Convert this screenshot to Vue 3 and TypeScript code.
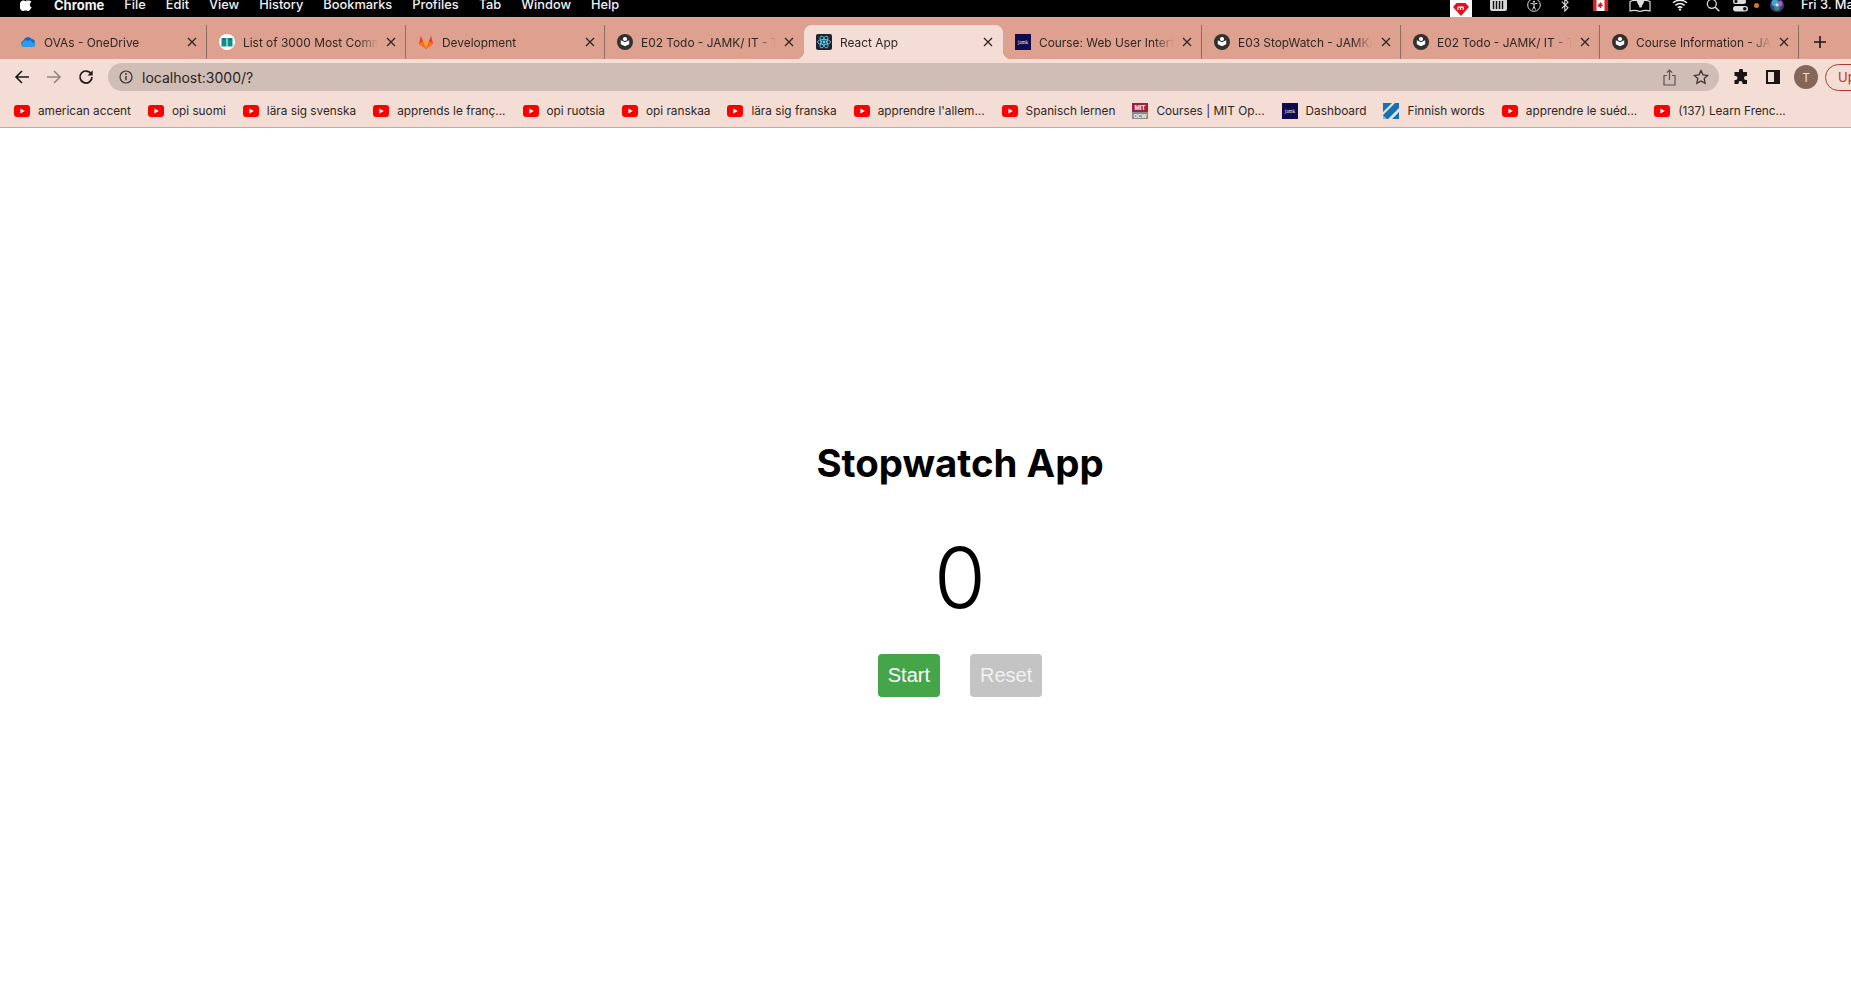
<script setup lang="ts">
import { ref } from "vue";

interface Tab {
	title: string;
	icon: string;
	active?: boolean;
}

interface Bookmark {
	title: string;
	icon: string;
}

const menus = ["File", "Edit", "View", "History", "Bookmarks", "Profiles", "Tab", "Window", "Help"];

const tabs: Tab[] = [
	{ title: "OVAs - OneDrive", icon: "onedrive" },
	{ title: "List of 3000 Most Common Words", icon: "book" },
	{ title: "Development", icon: "gitlab" },
	{ title: "E02 Todo - JAMK/ IT - Tiko", icon: "gitbook" },
	{ title: "React App", icon: "react", active: true },
	{ title: "Course: Web User Interfaces", icon: "jamk" },
	{ title: "E03 StopWatch - JAMK/ IT", icon: "gitbook" },
	{ title: "E02 Todo - JAMK/ IT - Tiko", icon: "gitbook" },
	{ title: "Course Information - JAMK", icon: "gitbook" },
];

const bookmarks: Bookmark[] = [
	{ title: "american accent", icon: "youtube" },
	{ title: "opi suomi", icon: "youtube" },
	{ title: "lära sig svenska", icon: "youtube" },
	{ title: "apprends le franç...", icon: "youtube" },
	{ title: "opi ruotsia", icon: "youtube" },
	{ title: "opi ranskaa", icon: "youtube" },
	{ title: "lära sig franska", icon: "youtube" },
	{ title: "apprendre l'allem...", icon: "youtube" },
	{ title: "Spanisch lernen", icon: "youtube" },
	{ title: "Courses | MIT Op...", icon: "mit" },
	{ title: "Dashboard", icon: "jamk" },
	{ title: "Finnish words", icon: "finnish" },
	{ title: "apprendre le suéd...", icon: "youtube" },
	{ title: "(137) Learn Frenc...", icon: "youtube" },
];

const seconds = ref(0);
</script>

<template>
	<div class="viewport">
		<svg class="sprite" width="0" height="0" aria-hidden="true">
			<symbol id="onedrive" viewBox="0 0 16 16">
				<path d="M4 12.5a3 3 0 0 1-.6-5.9A4.6 4.6 0 0 1 11.6 5 3.6 3.6 0 0 1 15 8.6l-6 3.9z" fill="#0f6cc4" />
				<path d="M3.4 13a2.4 2.4 0 0 1-.5-4.7 3 3 0 0 1 4.4-1.6 3.2 3.2 0 0 1 4.8 1.7A2.4 2.4 0 0 1 13.5 13z" fill="#2b9be8" />
			</symbol>
			<symbol id="book" viewBox="0 0 16 16">
				<circle cx="8" cy="8" r="8" fill="#fff" />
				<path d="M2.5 4h5v8.5h-5zM8.5 4h5v8.5h-5z" fill="#0f8f88" />
				<path d="M3.5 5.5h3M9.5 5.5h3" stroke="#076b66" stroke-width=".8" />
			</symbol>
			<symbol id="gitlab" viewBox="0 0 16 16">
				<path d="M8 15 1 9.7 2.8 1.8 5 7h6l2.2-5.200L15 9.7z" fill="#e24329" />
				<path d="M8 15 1 9.7 5 7z" fill="#fc6d26" />
				<path d="M8 15l7-5.300L11 7z" fill="#fc6d26" />
				<path d="M8 15 5 7h6z" fill="#fca326" />
			</symbol>
			<symbol id="gitbook" viewBox="0 0 16 16">
				<circle cx="8" cy="8" r="8" fill="#333030" />
				<path d="M3.8 6.3 8 8.2l4.2-1.900v3.900L8 12.3l-4.200-2.100z" fill="#fff" />
				<circle cx="8" cy="5" r="2.1" fill="#fff" />
			</symbol>
			<symbol id="react" viewBox="0 0 16 16">
				<rect width="16" height="16" rx="2" fill="#20232a" />
				<g fill="none" stroke="#61dafb" stroke-width=".8">
					<ellipse cx="8" cy="8" rx="6.5" ry="2.6" />
					<ellipse cx="8" cy="8" rx="6.5" ry="2.6" transform="rotate(60 8 8)" />
					<ellipse cx="8" cy="8" rx="6.5" ry="2.6" transform="rotate(120 8 8)" />
				</g>
				<circle cx="8" cy="8" r="1.4" fill="#61dafb" />
			</symbol>
			<symbol id="jamk" viewBox="0 0 16 16">
				<rect width="16" height="16" fill="#110a4b" />
				<text x="8" y="9.8" text-anchor="middle" font-size="5.2" font-family="'Liberation Serif', serif" fill="#e8e6f4">jamk</text>
			</symbol>
			<symbol id="youtube" viewBox="0 0 16 16">
				<rect y="2" width="16" height="12" rx="3" fill="#f00" />
				<path d="M6.4 5.600 10.800 8l-4.400 2.400z" fill="#fff" />
			</symbol>
			<symbol id="mit" viewBox="0 0 16 16">
				<rect width="16" height="9" fill="#a31f34" />
				<rect y="9" width="16" height="7" fill="#8a8b8c" />
				<text x="8" y="7.2" text-anchor="middle" font-size="6.4" font-weight="700" font-family="'Liberation Sans', sans-serif" fill="#fff">MIT</text>
				<text x="8" y="15" text-anchor="middle" font-size="5.4" font-weight="700" font-family="'Liberation Sans', sans-serif" fill="#fff">OCW</text>
			</symbol>
			<symbol id="finnish" viewBox="0 0 16 16">
				<rect width="16" height="16" fill="#1a6fb0" />
				<path d="M0 9 9 0h3L0 12zM5 16 16 5v4l-7 7z" fill="#dfe6ec" />
				<path d="M0 16V12l4 4z" fill="#8fb6d2" />
			</symbol>
		</svg>

		<div class="browser">
			<header class="menubar">
				<svg class="apple" width="13" height="14" viewBox="0 0 13 14" aria-hidden="true">
					<path d="M9 .2c.1 1-.3 1.800-.8 2.400-.6.600-1.300 1-2.100.9-.1-.9.300-1.800.8-2.300C7.500.6 8.300.2 9 .2zM11.700 10.200c-.4.800-.6 1.200-1.100 1.900-.6 1-1.500 2-2.600 2-1 0-1.200-.6-2.500-.6s-1.600.6-2.600.6c-1.100 0-1.900-1-2.500-1.900C-.4 9.700-.6 6.800.4 5.300c.7-1.100 1.800-1.700 2.900-1.700s1.800.6 2.700.6 1.400-.6 2.700-.6c1 0 2 .5 2.700 1.400-2.300 1.300-1.900 4.600.2 5.200z" fill="#fff" />
				</svg>
				<strong class="menu-app">Chrome</strong>
				<span v-for="menu in menus" :key="menu" class="menu-item">{{ menu }}</span>

				<div class="status">
					<span class="status-app">
						<svg width="16" height="14" viewBox="0 0 16 14" aria-hidden="true">
							<path d="M3.500 1h9L16 5 8 14 0 5z" fill="#e1121b" />
							<path d="M4.800 8V5.200M7.500 8V5.200M10.200 8V5.200M4.800 5.500c1.500-1 2.700-.6 2.700.4M7.500 5.500c1.500-1 2.700-.6 2.700.4" fill="none" stroke="#fff" stroke-width="1.200" />
						</svg>
					</span>
					<svg class="st-barcode" width="17" height="12" viewBox="0 0 17 12" aria-hidden="true">
						<rect width="17" height="12" rx="2" fill="#d8d8d8" />
						<path d="M3.500 2v8M6.500 2v8M9.500 2v8M12.500 2v8" stroke="#111" stroke-width="1.400" />
					</svg>
					<svg class="st-access" width="14" height="14" viewBox="0 0 14 14" aria-hidden="true">
						<circle cx="7" cy="7" r="6.300" fill="none" stroke="#ddd" />
						<circle cx="7" cy="3.700" r="1" fill="#ddd" />
						<path d="M3.500 5.300 7 6l3.500-.7M7 6v2.500M7 8.500 5.500 11.500M7 8.500l1.500 3" fill="none" stroke="#ddd" />
					</svg>
					<svg class="st-bt" width="8" height="14" viewBox="0 0 8 14" aria-hidden="true">
						<path d="M.8 3.700 7 9.800 3.800 13V1L7 4.200.8 10.300" fill="none" stroke="#ddd" stroke-width="1.100" />
					</svg>
					<svg class="st-flag" width="15" height="11" viewBox="0 0 15 11" aria-hidden="true">
						<rect width="15" height="11" fill="#fff" />
						<path d="M0 0h3.500v11H0zM11.500 0H15v11h-3.500zM7.500 2l.8 1.500 1-.4-.3 2 1-.4-.2 1.300-1.500.6H8v1.400H7V7.100h-.8L4.700 6.500 4.500 5.200l1 .4-.3-2 1 .4z" fill="#d8202a" />
					</svg>
					<svg class="st-map" width="23" height="13" viewBox="0 0 23 13" aria-hidden="true">
						<path d="M1 2.500c3-1.500 6-1.500 10 0 4-1.500 7-1.500 10 0v9.500c-3-1-6-1-10 .5-4-1.500-7-1.500-10-.5z" fill="none" stroke="#ddd" stroke-width="1.200" />
						<path d="M8 2.500a3.500 3 0 0 1 7 0c0 2-2 3-2.500 6h-2C10 5.500 8 4.500 8 2.500z" fill="#ddd" />
					</svg>
					<svg class="st-wifi" width="16" height="12" viewBox="0 0 16 12" aria-hidden="true">
						<path d="M1 3.800c4-3.400 10-3.400 14 0M3.400 6.300c2.700-2.200 6.500-2.200 9.200 0M5.700 8.700c1.400-1 3.200-1 4.600 0" fill="none" stroke="#f2f2f2" stroke-width="1.500" />
						<circle cx="8" cy="10.600" r="1.200" fill="#f2f2f2" />
					</svg>
					<svg class="st-search" width="14" height="14" viewBox="0 0 14 14" aria-hidden="true">
						<circle cx="5.800" cy="5.800" r="4.500" fill="none" stroke="#ddd" stroke-width="1.300" />
						<path d="m9 9 4.300 4.300" stroke="#ddd" stroke-width="1.500" />
					</svg>
					<svg class="st-cc" width="15" height="14" viewBox="0 0 15 14" aria-hidden="true">
						<rect y="1" width="13" height="5" rx="2.500" fill="#ddd" />
						<circle cx="3" cy="3.500" r="1.600" fill="#111" />
						<rect y="8" width="15" height="5.500" rx="2.700" fill="#ddd" />
						<circle cx="11.800" cy="10.700" r="1.800" fill="#111" />
					</svg>
					<span class="st-dot"></span>
					<svg class="st-siri" width="14" height="14" viewBox="0 0 14 14" aria-hidden="true">
						<circle cx="7" cy="7" r="7" fill="#3a3f7a" />
						<circle cx="5" cy="5" r="3.400" fill="#3fa7c9" />
						<circle cx="9.500" cy="5.800" r="2.800" fill="#b45ab8" />
						<circle cx="7" cy="9.800" r="2.700" fill="#2f8f88" />
						<circle cx="7" cy="6.800" r="1.600" fill="#d9e3f2" />
					</svg>
					<span class="status-date">Fri 3. Mar</span>
				</div>
			</header>

			<div class="tabstrip">
				<div
					v-for="tab in tabs"
					:key="tab.title + tab.icon"
					class="tab"
					:class="{ 'tab-active': tab.active }"
				>
					<svg class="favicon" width="16" height="16" aria-hidden="true"><use :href="'#' + tab.icon" /></svg>
					<span class="tab-title">{{ tab.title }}</span>
					<svg class="tab-close" width="10" height="10" viewBox="0 0 10 10" aria-hidden="true">
						<path d="m1 1 8 8M9 1 1 9" stroke="#2f2724" stroke-width="1.300" />
					</svg>
				</div>
				<svg class="tab-new" width="14" height="14" viewBox="0 0 14 14" aria-hidden="true">
					<path d="M7 1v12M1 7h12" stroke="#1d1715" stroke-width="1.600" />
				</svg>
			</div>

			<div class="toolbar">
				<svg class="nav-btn" width="16" height="16" viewBox="0 0 16 16" aria-hidden="true">
					<path d="M15 8H2M8 2 2 8l6 6" fill="none" stroke="#1f1a18" stroke-width="1.600" />
				</svg>
				<svg class="nav-btn" width="16" height="16" viewBox="0 0 16 16" aria-hidden="true">
					<path d="M1 8h13M8 2l6 6-6 6" fill="none" stroke="#95857f" stroke-width="1.600" />
				</svg>
				<svg class="nav-btn" width="16" height="16" viewBox="0 0 16 16" aria-hidden="true">
					<path d="M13.300 5.200A6 6 0 1 0 14 8" fill="none" stroke="#1f1a18" stroke-width="1.700" />
					<path d="M14.700 1.200v5.200H9.500z" fill="#1f1a18" />
				</svg>
				<div class="omnibox">
					<svg width="14" height="14" viewBox="0 0 14 14" aria-hidden="true">
						<circle cx="7" cy="7" r="6" fill="none" stroke="#3c3230" stroke-width="1.200" />
						<path d="M7 6v4.200" stroke="#3c3230" stroke-width="1.400" />
						<circle cx="7" cy="4" r=".9" fill="#3c3230" />
					</svg>
					<span class="url">localhost:3000/?</span>
					<svg class="omni-share" width="13" height="17" viewBox="0 0 13 17" aria-hidden="true">
						<path d="M4 6.500H1v9.500h11V6.500H9M6.500 11V1M3.800 3.600 6.500 1l2.700 2.600" fill="none" stroke="#5d5250" stroke-width="1.200" />
					</svg>
					<svg class="omni-star" width="16" height="16" viewBox="0 0 16 16" aria-hidden="true">
						<path d="m8 1.500 2 4.300 4.700.6-3.500 3.200.9 4.700L8 12l-4.100 2.300.9-4.700L1.300 6.400 6 5.800z" fill="none" stroke="#3c3230" stroke-width="1.300" />
					</svg>
				</div>
				<svg class="tool-puzzle" width="16" height="16" viewBox="0 0 16 16" aria-hidden="true">
					<path d="M6 1.500a2 2 0 0 1 4 .5v1h4v4h-1a2 2 0 0 0 0 4h1v4H9.500v-1a2 2 0 0 0-4 0v1H1.500v-4h1a2 2 0 0 0 0-4h-1V3H6z" fill="#1a1513" />
				</svg>
				<svg class="tool-panel" width="14" height="14" viewBox="0 0 14 14" aria-hidden="true">
					<rect x="1" y="1" width="12" height="12" fill="none" stroke="#1a1513" stroke-width="2" />
					<rect x="8" y="1" width="5" height="12" fill="#1a1513" />
				</svg>
				<span class="avatar">T</span>
				<span class="update">Update</span>
			</div>

			<nav class="bookmarks">
				<span v-for="mark in bookmarks" :key="mark.title" class="bookmark">
					<svg class="favicon" width="16" height="16" aria-hidden="true"><use :href="'#' + mark.icon" /></svg>
					{{ mark.title }}
				</span>
			</nav>

			<main class="page">
				<h1 class="title">Stopwatch App</h1>
				<div class="clock">{{ seconds }}</div>
				<div class="actions">
					<button type="button" class="btn btn-start">Start</button>
					<button type="button" class="btn btn-reset" disabled>Reset</button>
				</div>
			</main>
		</div>
	</div>
</template>

<style scoped>
.viewport {
	width: 1851px;
	height: 1007px;
	overflow: hidden;
	background: #fff;
}

.sprite {
	display: block;
}

/* the captured window is wider than the picture, its right edge is cut off */
.browser {
	width: 1920px;
	font-family: Inter, "Liberation Sans", sans-serif;
}

.menubar {
	display: flex;
	align-items: center;
	gap: 20px;
	height: 17px;
	padding: 0 0 7px 20px;
	box-sizing: border-box;
	background: #000;
	color: #f2f2f2;
	font-size: 12.8px;
	font-weight: 500;
	line-height: 10px;
}

.apple {
	margin-right: 1px;
	margin-top: -2px;
}

.menu-app {
	font-size: 13px;
	font-weight: 700;
}

.status {
	display: flex;
	align-items: center;
	margin-left: auto;
}

.status-app {
	display: flex;
	align-items: center;
	justify-content: center;
	width: 22px;
	height: 17px;
	margin-bottom: -7px;
	background: #fff;
}

.st-barcode {
	margin-left: 18px;
}

.st-access {
	margin-left: 20px;
}

.st-bt {
	margin-left: 20px;
}

.st-flag {
	margin-left: 24px;
}

.st-map {
	margin-left: 21px;
}

.st-wifi {
	margin-left: 20px;
}

.st-search {
	margin-left: 18px;
}

.st-cc {
	margin-left: 13px;
}

.st-dot {
	width: 5px;
	height: 5px;
	margin-left: 6px;
	border-radius: 50%;
	background: #d9771c;
}

.st-siri {
	margin-left: 11px;
}

.status-date {
	width: 119px;
	margin-left: 17px;
	white-space: nowrap;
}

.tabstrip {
	display: flex;
	align-items: flex-end;
	height: 42px;
	padding-left: 8px;
	background: #dea18f;
	font-size: 11.9px;
	color: #2f2724;
}

.tab {
	position: relative;
	display: flex;
	align-items: center;
	flex: 0 0 199px;
	min-width: 0;
	box-sizing: border-box;
	height: 34px;
	padding: 0 9px 0 12px;
	border-right: 1px solid #8f6c60;
}

.tab:has(+ .tab-active) {
	border-right-color: transparent;
}

.tab-active {
	padding-right: 10px;
	border-right: 0;
	border-radius: 8px 8px 0 0;
	background: #f4ddd5;
}

.tab-active::before,
.tab-active::after {
	content: "";
	position: absolute;
	bottom: 0;
	width: 8px;
	height: 8px;
}

.tab-active::before {
	left: -8px;
	background: radial-gradient(circle at 0 0, transparent 8px, #f4ddd5 8.5px);
}

.tab-active::after {
	right: -8px;
	background: radial-gradient(circle at 100% 0, transparent 8px, #f4ddd5 8.5px);
}

.favicon {
	flex: none;
}

.tab-title {
	flex: 1;
	min-width: 0;
	margin: 0 8px;
	overflow: hidden;
	white-space: nowrap;
	-webkit-mask-image: linear-gradient(to left, transparent 0, #000 20px);
	mask-image: linear-gradient(to left, transparent 0, #000 20px);
}

.tab-close {
	flex: none;
}

.tab-new {
	margin: 0 0 10px 14px;
}

.toolbar {
	display: flex;
	align-items: center;
	height: 32px;
	padding: 4px 0 0 14px;
	box-sizing: border-box;
	background: #f4ddd5;
}

.nav-btn {
	flex: none;
	margin-right: 16px;
}

.omnibox {
	display: flex;
	align-items: center;
	width: 1612px;
	height: 28px;
	margin-left: -2px;
	padding: 0 10px 0 11px;
	box-sizing: border-box;
	border-radius: 14px;
	background: #cfbdb6;
}

.url {
	margin-left: 9px;
	font-size: 14px;
	color: #2d2422;
}

.omni-share {
	margin-left: auto;
	margin-right: 17px;
}

.tool-puzzle {
	margin-left: 14px;
}

.tool-panel {
	margin-left: 17px;
}

.avatar {
	display: flex;
	align-items: center;
	justify-content: center;
	width: 24px;
	height: 24px;
	margin-left: 14px;
	border-radius: 50%;
	background: #84665a;
	color: #f4ddd5;
	font-size: 12px;
}

.update {
	display: flex;
	align-items: center;
	width: 95px;
	height: 27px;
	margin-left: 7px;
	padding-left: 12px;
	box-sizing: border-box;
	border: 1px solid #b3352f;
	border-radius: 14px;
	color: #b3352f;
	font-size: 13px;
}

.bookmarks {
	display: flex;
	align-items: center;
	gap: 17px;
	height: 37px;
	padding: 4px 0 0 14px;
	box-sizing: border-box;
	border-bottom: 1px solid #bfaca6;
	background: #f4ddd5;
	font-size: 11.8px;
	color: #2f2724;
}

.bookmark {
	display: flex;
	align-items: center;
	gap: 8px;
	white-space: nowrap;
}

.page {
	display: flex;
	flex-direction: column;
	align-items: center;
	height: 879px;
	padding-top: 311px;
	box-sizing: border-box;
	background: #fff;
	color: #000;
}

.title {
	margin: 0;
	font-size: 38.4px;
	font-weight: 700;
	line-height: 48px;
}

.clock {
	margin-top: 43px;
	font-size: 84px;
	font-weight: 300;
	line-height: 96px;
}

.actions {
	display: flex;
	gap: 30px;
	margin-top: 28px;
}

.btn {
	height: 43px;
	padding: 0 10px;
	border: 0;
	border-radius: 4px;
	color: #fff;
	font-family: "Liberation Sans", Arial, sans-serif;
	font-size: 20px;
}

.btn-start {
	background: #45a549;
}

.btn-reset {
	background: #c4c4c4;
	color: #f1f1f1;
}
</style>
